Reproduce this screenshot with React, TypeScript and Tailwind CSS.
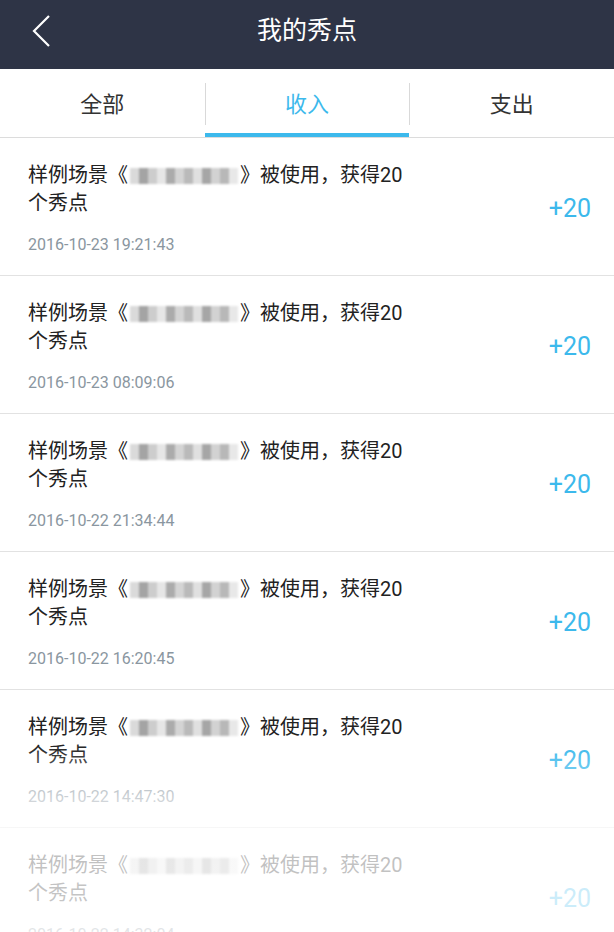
import { ReactNode } from "react";

const records = [
  "2016-10-23 19:21:43",
  "2016-10-23 08:09:06",
  "2016-10-22 21:34:44",
  "2016-10-22 16:20:45",
  "2016-10-22 14:47:30",
  "2016-10-22 14:32:04",
];

// pixelated name, just grey squares
const mosaic = [
  "bg-[#dadada]", "bg-[#a4a4a4]", "bg-[#cdcdcd]", "bg-[#e6e6e6]", "bg-[#ababab]", "bg-[#d4d4d4]",
  "bg-[#bababa]", "bg-[#e0e0e0]", "bg-[#a6a6a6]", "bg-[#d2d2d2]", "bg-[#b8b8b8]", "bg-[#e8e8e8]",
];

function Mosaic() {
  return (
    <span className="inline-flex align-middle mx-[2px] blur-[0.8px]">
      {mosaic.map((c, i) => (
        <span key={i} className={`inline-block w-[9px] h-[16px] ${c}`} />
      ))}
    </span>
  );
}

function Header() {
  return (
    <div className="h-[69px] bg-[#2e3446] flex items-center relative">
      <svg className="absolute left-[30px] top-[14px]" width="22" height="34" viewBox="0 0 22 34">
        <polyline points="19,2 4,17 19,32" fill="none" stroke="white" strokeWidth="2.2" />
      </svg>
      <div className="flex-1 text-center text-white text-[25px] pb-[8px]">我的秀点</div>
    </div>
  );
}

function Tab(props: { children: ReactNode; active?: boolean; divider?: boolean }) {
  return (
    <div className="flex-1 relative flex items-center justify-center">
      {props.divider && <div className="absolute left-0 top-[14px] h-[42px] w-px bg-[#d9d9d9]" />}
      <span className={`text-[22px] pt-[2px] ${props.active ? "text-[#3cb9ec]" : "text-[#333]"}`}>{props.children}</span>
      {props.active && <div className="absolute left-0 right-0 bottom-0 h-[4px] bg-[#3cb9ec]" />}
    </div>
  );
}

function Row(props: { time: string }) {
  return (
    <div className="h-[138px] border-b border-[#e2e2e2] flex items-center justify-between pl-[28px] pr-[23px]">
      <div className="flex flex-col pt-[2px]">
        <div className="text-[20px] leading-[28px] text-[#222]">
          样例场景《<Mosaic />》被使用，获得20
          <br />
          个秀点
        </div>
        <div className="mt-[18px] text-[16px] leading-[20px] text-[#8a96a0]">{props.time}</div>
      </div>
      <div className="text-[25px] text-[#3cb9ec] mt-[4px]">+20</div>
    </div>
  );
}

export default function App() {
  return (
    <div className="w-[614px] h-[932px] bg-white overflow-hidden relative font-['Roboto','Noto_Sans_CJK_SC',sans-serif]">
      <Header />
      <div className="h-[69px] flex border-b border-[#dcdcdc]">
        <Tab>全部</Tab>
        <Tab active divider>收入</Tab>
        <Tab divider>支出</Tab>
      </div>
      {records.map((t) => (
        <Row key={t} time={t} />
      ))}
      <div className="absolute left-0 right-0 top-[745px] bottom-0 bg-gradient-to-b from-white/0 via-white/70 via-35% to-white/75 pointer-events-none" />
    </div>
  );
}
